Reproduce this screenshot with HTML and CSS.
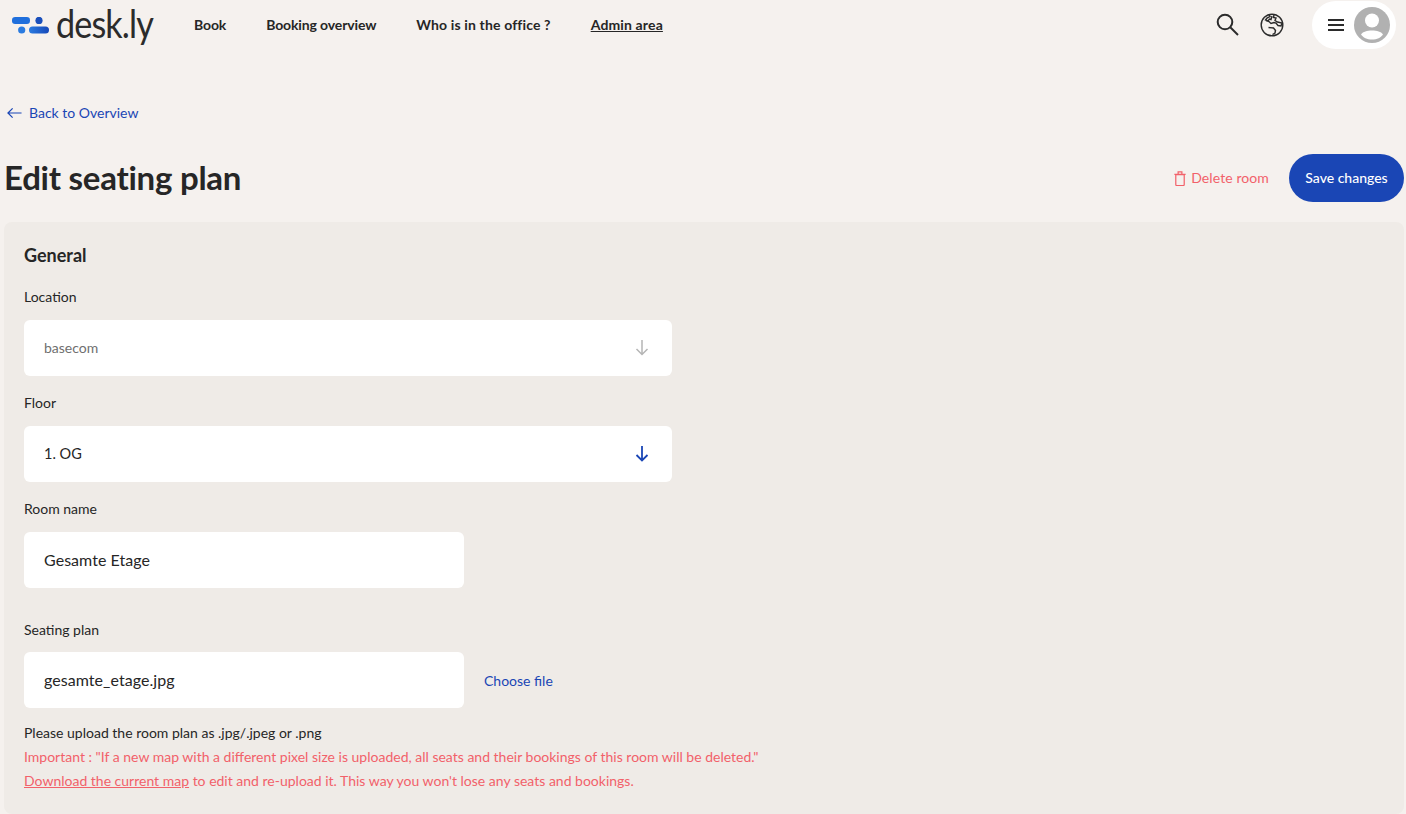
FILE: index.html
```html
<!DOCTYPE html>
<html lang="en">
<head>
<meta charset="utf-8">
<title>desk.ly</title>
<link rel="stylesheet" href="styles.css">
</head>
<body>
<header class="topbar">
  <div class="brand">
    <svg class="brand-mark" width="37" height="17" viewBox="0 0 37 17">
      <defs><linearGradient id="g" x1="0" y1="0" x2="1" y2="0"><stop offset="0" stop-color="#2a7be0"/><stop offset="1" stop-color="#1648b8"/></linearGradient></defs>
      <rect x="0" y="0" width="18" height="7" rx="3.200" fill="#1f6fdc"/>
      <circle cx="27" cy="3.400" r="3.600" fill="#1a4fbb"/>
      <circle cx="9.700" cy="13" r="3.600" fill="#2a7be0"/>
      <rect x="17" y="9.500" width="20" height="7" rx="3.500" fill="url(#g)"/>
    </svg>
    <span class="brand-name">desk.ly</span>
  </div>
  <nav class="nav">
    <a class="nav-link nav-tight">Book</a>
    <a class="nav-link nav-tight">Booking overview</a>
    <a class="nav-link nav-loose">Who is in the office ?</a>
    <a class="nav-link nav-loose nav-active">Admin area</a>
  </nav>
  <div class="tools">
    <svg class="tool" width="24" height="24" viewBox="0 0 24 24" fill="none" stroke="#2b2b2b" stroke-width="2"><circle cx="9" cy="9" r="7.300"/><path d="M14.500 14.500l7.500 7.500"/></svg>
    <svg class="tool" width="24" height="24" viewBox="0 0 24 24" fill="none" stroke="#2b2b2b" stroke-width="1.400"><circle cx="12" cy="12" r="10.800"/><path d="M9 1.800l1 1.700-3 1.500-1.500 2 2.500 1 1.500-2 1.500 .5 1-3.500M14 2l-.5 2.500 2.500.5-1 2.500 2.500 1.500 4.500 1-1 3-3-.5-2-2.500-2-.5-3 1-2-2-3-1M8.500 14.500l5 .5 2 2.500-.5 2.500-2.500 1.500"/></svg>
    <div class="account">
      <svg width="16" height="12" viewBox="0 0 16 12" stroke="#2b2b2b" stroke-width="2"><path d="M0 1h16M0 6h16M0 11h16"/></svg>
      <svg width="36" height="36" viewBox="0 0 36 36"><circle cx="18" cy="18" r="18" fill="#b1b1b1"/><circle cx="18" cy="13.500" r="7" fill="#fff"/><path d="M7 27.500c2-3 6-4 11-4s9 1 11 4c-2 3-6 5-11 5s-9-2-11-5z" fill="#fff"/></svg>
    </div>
  </div>
</header>
<main class="page">
  <a class="back">
    <svg width="15" height="12" viewBox="0 0 16 12" fill="none" stroke="#1a46b5" stroke-width="1.300"><path d="M15.500 6H1M6 1L1 6l5 5"/></svg>
    <span class="lift">Back to Overview</span>
  </a>
  <div class="title-row">
    <h1 class="title">Edit seating plan</h1>
    <div class="actions">
      <a class="delete">
        <svg width="12" height="15" viewBox="0 0 12 16" fill="none" stroke="#f2616a" stroke-width="1.300"><path d="M1.500 4h9v10.500a1 1 0 0 1-1 1h-7a1 1 0 0 1-1-1zM0 3.500h12M4 3.500V1h4v2.500"/></svg>
        <span class="lift">Delete room</span>
      </a>
      <button class="save">Save changes</button>
    </div>
  </div>
  <section class="card">
    <h2 class="card-title">General</h2>
    <div class="label label-first">Location</div>
    <div class="field field-wide field-muted">
      <span class="lift">basecom</span>
      <svg width="14" height="16" viewBox="0 0 14 16" fill="none" stroke="#b5b5b5" stroke-width="1.500"><path d="M7 0v14.500M1.500 9L7 14.500 12.500 9"/></svg>
    </div>
    <div class="label">Floor</div>
    <div class="field field-wide">
      <span class="lift">1. OG</span>
      <svg width="14" height="16" viewBox="0 0 14 16" fill="none" stroke="#1a46b5" stroke-width="1.800"><path d="M7 0v14.500M1.500 9L7 14.500 12.500 9"/></svg>
    </div>
    <div class="label">Room name</div>
    <div class="field field-narrow field-large"><span class="lift">Gesamte Etage</span></div>
    <div class="label label-gap">Seating plan</div>
    <div class="file-row">
      <div class="field field-narrow field-large"><span class="lift">gesamte_etage.jpg</span></div>
      <a class="choose">Choose file</a>
    </div>
    <p class="note first">Please upload the room plan as .jpg/.jpeg or .png</p>
    <p class="note warn">Important : "If a new map with a different pixel size is uploaded, all seats and their bookings of this room will be deleted."</p>
    <p class="note warn"><a class="warn-link">Download the current map</a> to edit and re-upload it. This way you won't lose any seats and bookings.</p>
  </section>
</main>
</body>
</html>
```
FILE: styles.css
```css
* { box-sizing: border-box; }
html, body { height: 100%; }
body {
  margin: 0;
  height: 814px;
  overflow: hidden;
  background: #f5f1ee;
  color: #262626;
  font-family: "Lato", "Liberation Sans", sans-serif;
  font-size: 14px;
}
.topbar {
  display: flex;
  align-items: center;
  height: 50px;
  padding: 0 10px 0 12px;
}
.brand { display: flex; align-items: center; flex: none; width: 182px; }
.brand-mark { flex: none; margin-top: 1px; }
.brand-name {
  display: inline-block;
  flex: none;
  font-size: 38px;
  line-height: 50px;
  margin: -5px 0 0 7px;
  letter-spacing: -1px;
  color: #2b2b2b;
  white-space: nowrap;
  transform: scaleX(0.9);
  transform-origin: left center;
}
.nav { display: flex; gap: 40px; flex: 1; margin-top: -2px; }
.nav-link { font-weight: 700; font-size: 14px; color: #262626; }
.nav-tight { letter-spacing: -0.130px; }
.nav-loose { letter-spacing: 0.140px; }
.nav-active { text-decoration: underline; }
.tools { display: flex; align-items: center; }
.tool { margin-right: 20px; }
.account {
  display: flex;
  align-items: center;
  gap: 10px;
  width: 84px;
  height: 48px;
  margin-left: 8px;
  padding: 0 6px 0 16px;
  background: #fff;
  border-radius: 24px;
}
.page { padding: 0 2px 0 4px; }
.lift { margin-top: -2px; }
.back {
  display: flex;
  align-items: center;
  gap: 7px;
  margin: 44px 0 0 3px;
  height: 38px;
  color: #1a46b5;
  font-size: 14px;
}
.title-row {
  display: flex;
  align-items: center;
  justify-content: space-between;
  height: 48px;
  margin-top: 22px;
}
.title { margin: -2px 0 0 0; font-size: 33px; font-weight: 700; letter-spacing: -0.250px; color: #262626; }
.actions { display: flex; align-items: center; gap: 20px; }
.delete { display: flex; align-items: center; gap: 5px; color: #f2616a; font-size: 14px; letter-spacing: 0.100px; }
.save {
  width: 115px;
  height: 48px;
  padding: 0 0 2px;
  border: 0;
  border-radius: 24px;
  background: #1a46b5;
  color: #fff;
  font: 500 14px "Lato", sans-serif;
}
.card {
  height: 592px;
  margin-top: 20px;
  padding: 20px;
  background: #efebe7;
  border-radius: 8px;
}
.card-title { margin: 0; font-size: 18px; line-height: 26px; font-weight: 700; }
.label { height: 24px; margin-top: 15px; font-size: 14px; line-height: 24px; }
.label-first { margin-top: 17px; }
.label-gap { margin-top: 30px; }
.field {
  display: flex;
  align-items: center;
  justify-content: space-between;
  height: 56px;
  padding: 0 23px 0 20px;
  background: #fff;
  border-radius: 6px;
  font-size: 14.500px;
}
.label + .field { margin-top: 11px; }
.field-wide { width: 648px; }
.field-muted { color: #6f6f6f; font-size: 14px; }
.field-narrow { width: 440px; }
.field-large { font-size: 16px; letter-spacing: 0.050px; }
.file-row { display: flex; align-items: center; gap: 20px; margin-top: 10px; }
.file-row .field { margin: 0; }
.choose { color: #1a46b5; font-size: 14px; }
.note { margin: 0; font-size: 14px; line-height: 24px; }
.note.first { margin-top: 13px; }
.warn { color: #f2616a; }
.warn-link { text-decoration: underline; }
```
